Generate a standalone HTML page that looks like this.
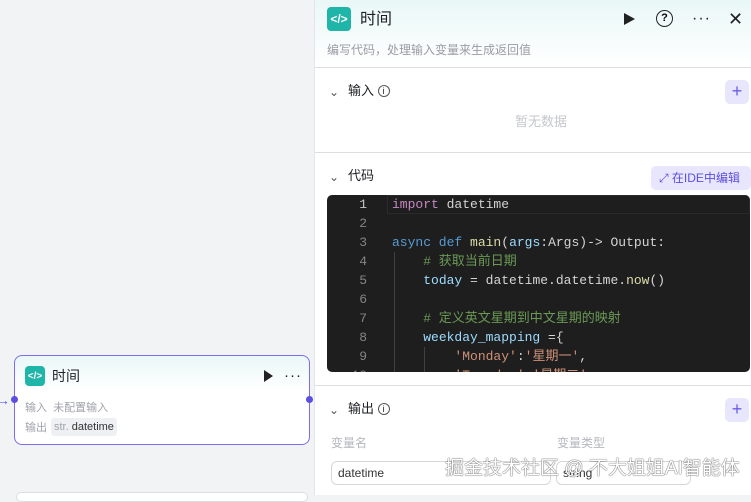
<!DOCTYPE html><html><head><meta charset="utf-8"><style>
*{box-sizing:border-box;margin:0;padding:0}
body{width:751px;height:495px;overflow:hidden;background:#f2f3f5;font-family:"Liberation Sans","Noto Sans CJK SC",sans-serif;position:relative}
.node{position:absolute;left:14px;top:355px;width:296px;height:90px;border:1px solid #7b6cf0;border-radius:8px;background:linear-gradient(#eaf7f7,#fff 40%)}
.ic{background:#1fb5a8;border-radius:4px;color:#fff;display:flex;align-items:center;justify-content:center;font-weight:bold}
.panel{position:absolute;left:314px;top:0;width:437px;height:495px;background:#fff;border-left:1px solid #e4e5e8}
.hdr{height:68px;background:linear-gradient(#eaf7f7,#fff);border-bottom:1px solid #dedfe3;position:relative}
.t{position:absolute;font-size:13px;color:#1d1f24;line-height:16px}
.g{color:#a0a3ab}
.plus{position:absolute;right:2px;width:24px;height:24px;background:#e8e6fc;border-radius:5px;color:#6b5ce7;font-size:18px;text-align:center;line-height:23px}
.code{position:absolute;left:12px;top:195px;width:423px;height:177px;background:#1e1e1e;border-radius:5px;overflow:hidden;font-family:"Liberation Mono","Noto Sans CJK SC",monospace;font-size:13px;color:#d4d4d4}
.ln,.cl{position:absolute;line-height:19px;height:19px;overflow:visible}
.ln{left:0;width:40px;text-align:right;color:#858585}
.cl{left:65px;white-space:pre}
.k{color:#c586c0}.b{color:#569cd6}.f{color:#dcdcaa}.c{color:#6a9955}.s{color:#ce9178}.v{color:#9cdcfe}
.inp{position:absolute;top:461px;height:24px;border:1px solid #d5d7dc;border-radius:6px;font-size:12px;color:#333;padding:4px 6px;line-height:14px}
.info{border:1px solid #555;border-radius:50%;display:inline-block;width:12px;height:12px;line-height:10px;text-align:center;font-size:9px;vertical-align:1px}
</style></head><body>
<div style="position:absolute;left:-4px;top:392px;color:#6b5ce7;font-size:14px">→</div>
<div class="node">
<div class="ic" style="position:absolute;left:10px;top:10px;width:20px;height:20px;font-size:10px">&lt;/&gt;</div>
<div class="t" style="left:37px;top:12px;font-size:14px">时间</div>
<div style="position:absolute;left:249px;top:14px;width:0;height:0;border-left:9px solid #222;border-top:6px solid transparent;border-bottom:6px solid transparent"></div>
<div class="t" style="left:269px;top:12px;font-size:15px;letter-spacing:1px">···</div>
<div class="t g" style="left:10px;top:44px;font-size:11px">输入 &nbsp;未配置输入</div>
<div class="t g" style="left:10px;top:64px;font-size:11px">输出</div>
<div style="position:absolute;left:36px;top:62px;background:#eef0f3;border-radius:3px;padding:2px 3px;font-size:11px;color:#333;line-height:14px"><span class="g">str.</span> datetime</div>
<div style="position:absolute;left:-4px;top:40px;width:7px;height:7px;border-radius:50%;background:#5b4ee0"></div>
<div style="position:absolute;right:-4px;top:40px;width:7px;height:7px;border-radius:50%;background:#5b4ee0"></div>
</div>
<div style="position:absolute;left:16px;top:492px;width:292px;height:10px;border:1px solid #dcdde0;border-radius:6px;background:#fff"></div>
<div class="panel">
<div class="hdr">
<div class="ic" style="position:absolute;left:12px;top:7px;width:24px;height:24px;font-size:12px">&lt;/&gt;</div>
<div class="t" style="left:45px;top:10px;font-size:16px;line-height:19px">时间</div>
<div style="position:absolute;left:309px;top:13px;border-left:11px solid #222;border-top:6px solid transparent;border-bottom:6px solid transparent"></div>
<div style="position:absolute;left:341px;top:10px;width:17px;height:17px;border:1.5px solid #222;border-radius:50%;font-size:11px;text-align:center;line-height:14px;font-weight:bold">?</div>
<div class="t" style="left:377px;top:11px;font-size:16px;letter-spacing:1px">···</div>
<div class="t" style="left:413px;top:9px;font-size:18px;line-height:20px">✕</div>
<div class="t g" style="left:12px;top:42px;font-size:12px;color:#9a9ca3">编写代码，处理输入变量来生成返回值</div>
</div>
<div class="t" style="left:14px;top:84px;font-size:12px;color:#555">⌄</div>
<div class="t" style="left:33px;top:83px">输入 <span class="info">i</span></div>
<div class="plus" style="top:80px">+</div>
<div class="t" style="left:200px;top:114px;color:#c5c7cc">暂无数据</div>
<div style="position:absolute;left:0;top:152px;width:437px;border-top:1px solid #dedfe3"></div>
<div class="t" style="left:14px;top:169px;font-size:12px;color:#555">⌄</div>
<div class="t" style="left:33px;top:168px">代码</div>
<div style="position:absolute;left:336px;top:166px;width:100px;height:24px;background:#e8e6fc;border-radius:5px;color:#5b4ee0;font-size:12px;line-height:24px;padding-left:8px">⤢ 在IDE中编辑</div>
<div class="code">
<div style="position:absolute;left:60px;top:0;width:363px;height:19px;border:1px solid #2a2a2a"></div>
<div style="position:absolute;left:67px;top:57px;height:120px;border-left:1px solid #404040"></div>
<div style="position:absolute;left:97px;top:152px;height:25px;border-left:1px solid #404040"></div>
<div class="ln" style="top:0px;color:#c6c6c6">1</div><div class="cl" style="top:0px"><span class="k">import</span> datetime</div>
<div class="ln" style="top:19px">2</div>
<div class="ln" style="top:38px">3</div><div class="cl" style="top:38px"><span class="b">async def</span> <span class="f">main</span>(<span class="v">args</span>:Args)-&gt; Output:</div>
<div class="ln" style="top:57px">4</div><div class="cl c" style="top:57px">    # 获取当前日期</div>
<div class="ln" style="top:76px">5</div><div class="cl" style="top:76px">    <span class="v">today</span> = datetime.datetime.<span class="f">now</span>()</div>
<div class="ln" style="top:95px">6</div>
<div class="ln" style="top:114px">7</div><div class="cl c" style="top:114px">    # 定义英文星期到中文星期的映射</div>
<div class="ln" style="top:133px">8</div><div class="cl" style="top:133px">    <span class="v">weekday_mapping</span> ={</div>
<div class="ln" style="top:152px">9</div><div class="cl" style="top:152px">        <span class="s">'Monday'</span>:<span class="s">'星期一'</span>,</div>
<div class="ln" style="top:171px">10</div><div class="cl" style="top:171px">        <span class="s">'Tuesday'</span>:<span class="s">'星期二'</span>,</div>
</div>
<div style="position:absolute;left:0;top:385px;width:437px;border-top:1px solid #dedfe3"></div>
<div class="t" style="left:14px;top:402px;font-size:12px;color:#555">⌄</div>
<div class="t" style="left:33px;top:401px">输出 <span class="info">i</span></div>
<div class="plus" style="top:398px">+</div>
<div class="t g" style="left:16px;top:435px;font-size:12px;color:#b5b7bd">变量名</div>
<div class="t g" style="left:242px;top:435px;font-size:12px;color:#b5b7bd">变量类型</div>
<div class="inp" style="left:16px;width:220px">datetime</div>
<div class="inp" style="left:241px;width:135px">string</div>
<div class="t" style="left:130px;top:458px;font-size:19px;line-height:22px;color:#fff;text-shadow:0 0 1px #444,0 0 1px #444">掘金技术社区 @ 不大姐姐AI智能体</div>
</div>
</body></html>
